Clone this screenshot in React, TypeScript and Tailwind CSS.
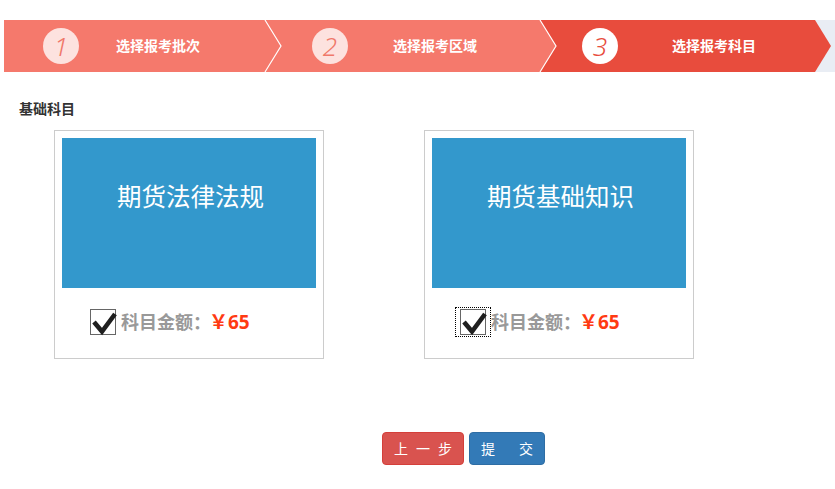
const font = { fontFamily: '"Noto Sans", "Noto Sans CJK SC", sans-serif' };

type Step = { n: string; label: string; active: boolean; body: string; last: boolean };

const steps: Step[] = [
  { n: "1", label: "选择报考批次", active: false, body: "w-[261px] pl-[39px] gap-[37px]", last: false },
  { n: "2", label: "选择报考区域", active: false, body: "w-[275px] pl-[47px] gap-[45px]", last: false },
  { n: "3", label: "选择报考科目", active: true, body: "w-[275px] pl-[42px] gap-[54px]", last: true },
];

function StepItem({ step }: { step: Step }) {
  const fill = step.active ? "#e84c3d" : "#f5796c";
  return (
    <div
      className={`relative flex h-full items-center ${step.body} ${step.active ? "bg-[#e84c3d]" : "bg-[#f5796c]"}`}
    >
      <span
        className={`flex h-9 w-9 shrink-0 items-center justify-center rounded-full text-[26px] font-light italic leading-none ${
          step.active ? "bg-white text-[#e84c3d]" : "bg-[#fde2df] text-[#f0786a]"
        }`}
      >
        {step.n}
      </span>
      <span className="-mt-[2px] text-[14px] font-bold text-white">{step.label}</span>
      <svg className="absolute left-full top-0 z-10 h-[52px] w-[16px] overflow-visible" viewBox="0 0 16 52">
        <polygon points="0,0 16,26 0,52" fill={fill} />
        {!step.last && <polyline points="0,0 16,26 0,52" fill="none" stroke="#fff" strokeWidth="1.2" />}
      </svg>
    </div>
  );
}

function CheckBox({ focused }: { focused: boolean }) {
  return (
    <span
      className={`flex border border-dotted px-[4px] py-[1px] ${focused ? "border-black" : "border-transparent"}`}
    >
      <span className="relative block h-[26px] w-[26px] border border-[#666] bg-white">
        <svg className="absolute left-0 top-0 h-[26px] w-[26px] overflow-visible" viewBox="0 0 26 26">
          <path d="M3 12 L11 21.5 L24 4" fill="none" stroke="#1f1f1f" strokeWidth="4.6" strokeLinejoin="miter" />
        </svg>
      </span>
    </span>
  );
}

function Card({ title, focused }: { title: string; focused: boolean }) {
  return (
    <div className="flex h-[229px] w-[270px] flex-col border border-[#cccccc] p-[7px]">
      <div className="h-[150px] w-full bg-[#3398cc] pl-[3px] pt-[41px] text-center text-[24.5px] leading-[36px] text-white">
        {title}
      </div>
      <div className="flex items-center pl-[23px] pt-[19px]">
        <CheckBox focused={focused} />
        <span className="text-[18px] font-bold text-[#999999]">科目金额：</span>
        <span className="-ml-[2px] text-[19px] font-bold text-[#ff3a12]">￥65</span>
      </div>
    </div>
  );
}

export default function App() {
  return (
    <div className="min-h-[489px] w-[835px] bg-white pt-[20px]" style={font}>
      <div className="ml-[4px] flex h-[52px] bg-[#e9edf4]">
        {steps.map((s) => (
          <StepItem key={s.n} step={s} />
        ))}
      </div>

      <div className="ml-[19px] mt-[27px] text-[14px] font-bold leading-[20px] text-[#333333]">基础科目</div>

      <div className="mt-[11px] flex gap-[100px] pl-[54px]">
        <Card title="期货法律法规" focused={false} />
        <Card title="期货基础知识" focused={true} />
      </div>

      <div className="ml-[382px] mt-[73px] flex gap-[5px]">
        <button className="flex h-[33px] items-center gap-[8px] rounded-[4px] border border-[#d43f3a] bg-[#d9534f] px-[11px] text-[14px] text-white">
          <span>上</span>
          <span>一</span>
          <span>步</span>
        </button>
        <button className="flex h-[33px] items-center gap-[24px] rounded-[4px] border border-[#2e6da4] bg-[#337ab7] px-[11px] text-[14px] text-white">
          <span>提</span>
          <span>交</span>
        </button>
      </div>
    </div>
  );
}
